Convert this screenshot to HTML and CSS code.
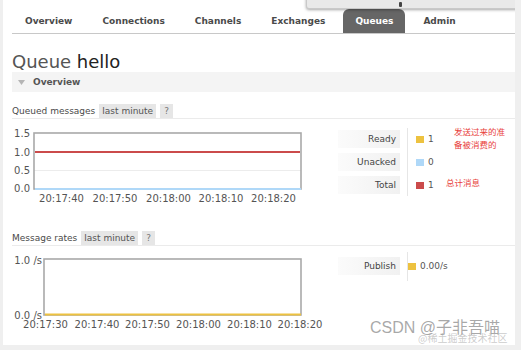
FILE: index.html
```html
<!DOCTYPE html>
<html>
<head>
<meta charset="utf-8">
<link rel="stylesheet" href="styles.css">
</head>
<body>
<div class="page">
  <div class="popup"><span class="glyph"></span></div>

  <nav class="tabs">
    <span class="tab">Overview</span>
    <span class="tab">Connections</span>
    <span class="tab">Channels</span>
    <span class="tab">Exchanges</span>
    <span class="tab active">Queues</span>
    <span class="tab">Admin</span>
  </nav>

  <h1 class="title">Queue <span class="name">hello</span></h1>

  <div class="section-hd">
    <svg class="tri" width="7" height="5" viewBox="0 0 7 5"><path d="M0 0 H7 L3.5 5 Z" fill="#b5b5b5"/></svg>
    <span>Overview</span>
  </div>

  <div class="sub-hd sub-1">
    <span>Queued messages</span>
    <span class="tag">last minute</span>
    <span class="tag q">?</span>
  </div>

  <div class="chart-row row-1">
    <svg class="chart" width="326" height="78" viewBox="0 0 326 78">
      <g class="axis">
        <text x="18" y="8.5" text-anchor="end">1.5</text>
        <text x="18" y="27.5" text-anchor="end">1.0</text>
        <text x="18" y="45.5" text-anchor="end">0.5</text>
        <text x="18" y="63.5" text-anchor="end">0.0</text>
      </g>
      <line x1="22" y1="42.5" x2="289" y2="42.5" stroke="#ececec" stroke-width="1"/>
      <rect x="22" y="5" width="267" height="56" fill="#fff" fill-opacity="0" stroke="#a9a9a9" stroke-width="1.6"/>
      <line x1="23" y1="24" x2="288" y2="24" stroke="#cb4b4b" stroke-width="2"/>
      <line x1="23" y1="61" x2="289" y2="61" stroke="#afd8f8" stroke-width="1.8"/>
      <g class="axis">
        <text x="49.5" y="74" text-anchor="middle">20:17:40</text>
        <text x="103" y="74" text-anchor="middle">20:17:50</text>
        <text x="156.5" y="74" text-anchor="middle">20:18:00</text>
        <text x="209" y="74" text-anchor="middle">20:18:10</text>
        <text x="261.5" y="74" text-anchor="middle">20:18:20</text>
      </g>
    </svg>
    <div class="legend">
      <div class="labels">
        <div class="lcell">Ready</div>
        <div class="lcell">Unacked</div>
        <div class="lcell">Total</div>
      </div>
      <div class="values">
        <div class="vcell"><span class="sw ready"></span>1</div>
        <div class="vcell"><span class="sw unacked"></span>0</div>
        <div class="vcell"><span class="sw total"></span>1</div>
      </div>
    </div>
  </div>

  <div class="sub-hd sub-2">
    <span>Message rates</span>
    <span class="tag">last minute</span>
    <span class="tag q">?</span>
  </div>

  <div class="chart-row row-2">
    <svg class="chart" width="326" height="80" viewBox="0 0 326 80">
      <g class="axis">
        <text x="30" y="11.5" text-anchor="end">1.0 /s</text>
        <text x="30" y="67" text-anchor="end">0.0 /s</text>
      </g>
      <rect x="32" y="7" width="257" height="56" fill="none" stroke="#a9a9a9" stroke-width="1.6"/>
      <line x1="33" y1="62.5" x2="289" y2="62.5" stroke="#edc240" stroke-width="2"/>
      <g class="axis">
        <text x="33.5" y="76" text-anchor="middle">20:17:30</text>
        <text x="85" y="76" text-anchor="middle">20:17:40</text>
        <text x="135.5" y="76" text-anchor="middle">20:17:50</text>
        <text x="186.5" y="76" text-anchor="middle">20:18:00</text>
        <text x="237.5" y="76" text-anchor="middle">20:18:10</text>
        <text x="288" y="76" text-anchor="middle">20:18:20</text>
      </g>
    </svg>
    <div class="legend">
      <div class="labels">
        <div class="lcell">Publish</div>
      </div>
      <div class="values">
        <div class="vcell"><span class="sw ready"></span>0.00/s</div>
      </div>
    </div>
  </div>

  <div class="note note-1">发送过来的准<br>备被消费的</div>
  <div class="note note-2">总计消息</div>

  <div class="watermark">CSDN @子非吾喵</div>
  <div class="watermark-2">@稀土掘金技术社区</div>
</div>
</body>
</html>
```

FILE: styles.css
```css
html, body {
  margin: 0;
  padding: 0;
}
body {
  background: #efefef;
  width: 521px;
  height: 350px;
  overflow: hidden;
  font-family: "DejaVu Sans", Verdana, sans-serif;
  font-size: 9px;
  color: #484848;
}
.page {
  position: relative;
  margin-left: 3px;
  width: 503px;
  height: 345px;
  padding-left: 9px;
  background: #fff;
  overflow: hidden;
}
.popup {
  position: absolute;
  left: 303px;
  top: -4px;
  width: 230px;
  height: 11px;
  background: #e9e9e9;
  border: 1px solid #c9c9c9;
  border-radius: 0 0 0 3px;
  box-shadow: 0 1px 3px rgba(0, 0, 0, 0.35);
}
.glyph {
  position: absolute;
  left: 92px;
  top: 5px;
  width: 3px;
  height: 5px;
  background: #444;
  border-radius: 1px;
}
.tabs {
  display: flex;
  margin-top: 9px;
  height: 24px;
  border-bottom: 1px solid #c8c8c8;
}
.tab {
  display: flex;
  align-items: center;
  padding: 0 12px;
  margin-left: 1px;
  margin-right: 5px;
  font-weight: bold;
  font-size: 9px;
  color: #4a4a4a;
}
.tab.active {
  background: #666;
  color: #fff;
  border-radius: 6px 6px 0 0;
}
.title {
  margin: 18px 0 0 0;
  height: 20px;
  font-size: 18px;
  line-height: 20px;
  font-weight: normal;
  color: #555;
}
.title .name {
  color: #222;
}
.section-hd {
  display: flex;
  align-items: center;
  height: 20px;
  background: #f4f4f4;
  font-weight: bold;
  color: #555;
  font-size: 9px;
}
.section-hd .tri {
  margin-left: 6px;
  margin-right: 8px;
}
.sub-hd {
  display: flex;
  align-items: center;
  height: 15px;
  border-bottom: 1px solid #ebebeb;
  color: #4a4a4a;
  font-size: 9px;
}
.sub-1 {
  margin-top: 11px;
}
.sub-2 {
  margin-top: 24px;
}
.tag {
  display: flex;
  align-items: center;
  height: 14px;
  margin-left: 4px;
  padding: 0 3px;
  background: #e6e6e6;
  color: #555;
}
.tag.q {
  padding: 0 4px;
  color: #777;
}
.chart-row {
  display: flex;
  align-items: flex-start;
}
.row-1 {
  margin-top: 9px;
}
.row-2 {
  margin-top: 6px;
}
.chart {
  display: block;
  flex: none;
}
.axis text {
  font-family: "DejaVu Sans", Verdana, sans-serif;
  font-size: 10px;
  fill: #545454;
}
.legend {
  display: flex;
}
.labels, .values {
  display: flex;
  flex-direction: column;
  gap: 5px;
  padding: 2px 0;
}
.row-2 .labels, .row-2 .values {
  padding: 5px 0 6px;
}
.lcell {
  width: 58px;
  height: 18px;
  padding-right: 4px;
  display: flex;
  align-items: center;
  justify-content: flex-end;
  background: linear-gradient(to right, #fbfbfb, #f1f1f1);
  color: #444;
}
.values {
  margin-left: 7px;
  padding-left: 8px;
  border-left: 1px solid #e6e6e6;
}
.vcell {
  height: 18px;
  display: flex;
  align-items: center;
  color: #555;
}
.sw {
  width: 8px;
  height: 7px;
  margin-right: 4px;
}
.sw.ready { background: #edc240; }
.sw.unacked { background: #afd8f8; }
.sw.total { background: #cb4b4b; }
.note {
  position: absolute;
  font-family: "Noto Sans CJK SC", sans-serif;
  font-size: 8.5px;
  line-height: 13px;
  color: #e8413b;
}
.note-1 {
  left: 451px;
  top: 125px;
}
.note-2 {
  left: 443px;
  top: 176px;
}
.watermark {
  position: absolute;
  left: 367px;
  top: 318px;
  font-family: "Liberation Sans", "Noto Sans CJK SC", sans-serif;
  font-size: 16px;
  line-height: 20px;
  color: rgba(140, 140, 140, 0.75);
  white-space: nowrap;
}
.watermark-2 {
  position: absolute;
  left: 415px;
  top: 331px;
  font-family: "Noto Sans CJK SC", sans-serif;
  font-size: 10px;
  line-height: 13px;
  color: rgba(170, 170, 170, 0.6);
  white-space: nowrap;
}
```
